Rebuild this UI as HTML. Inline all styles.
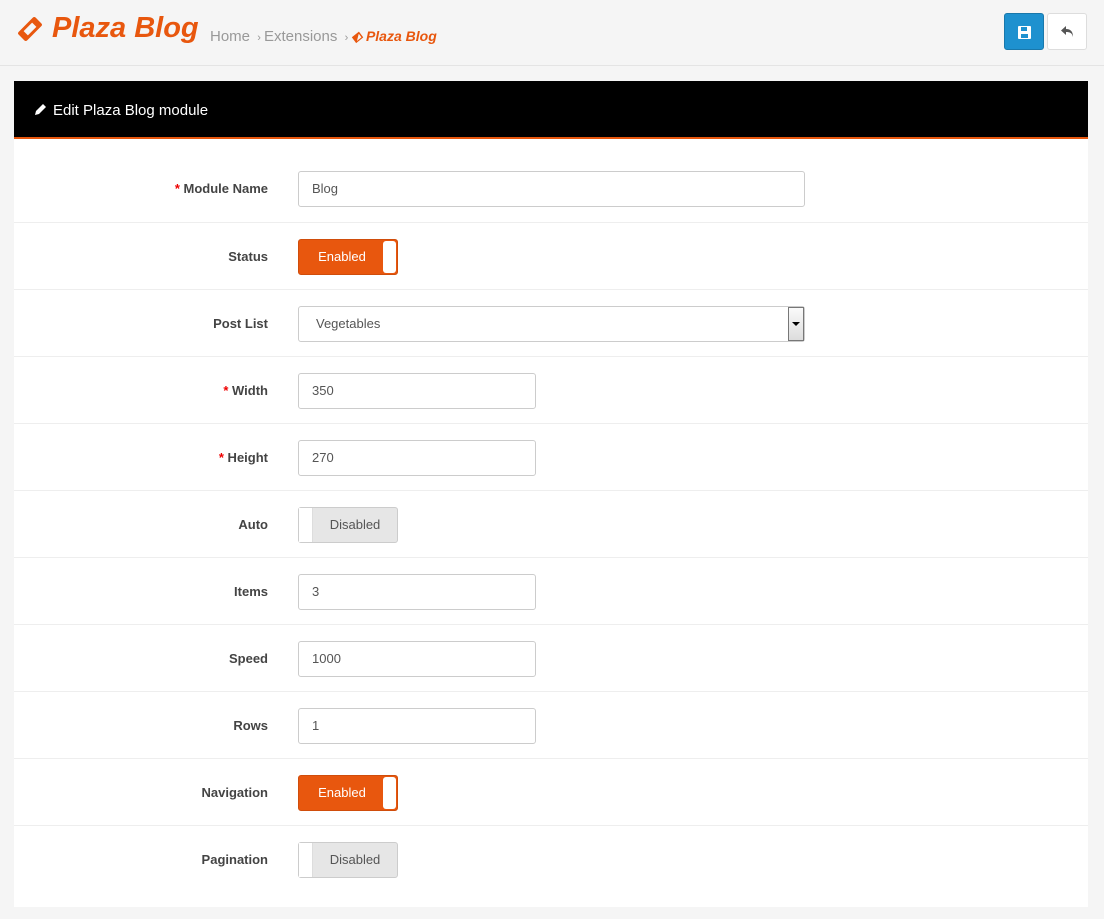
<!DOCTYPE html>
<html><head><meta charset="utf-8"><style>
*{box-sizing:border-box;margin:0;padding:0}
body{width:1104px;height:919px;background:#f5f5f5;font-family:"Liberation Sans",sans-serif;font-size:13px;color:#555;overflow:hidden;position:relative}
.hdr{height:66px;border-bottom:1px solid #e4e4e4;position:relative}
.title{position:absolute;left:14px;top:12px;font-size:29px;font-weight:bold;font-style:italic;color:#e8570e;display:flex;align-items:center}
.bc{position:absolute;left:210px;top:28px;font-size:15px;color:#999}
.bc span.c{color:#e8570e;font-weight:bold;font-style:italic;font-size:14px}
.btn{position:absolute;top:13px;width:40px;height:37px;border-radius:3px}
.panel{position:absolute;left:14px;top:81px;width:1074px;height:826px;background:#fff}
.ph{height:58px;background:#000;border-bottom:2px solid #e8570e;color:#fff;font-size:15px;padding:21px 0 0 20px}
.row{position:absolute;left:0;width:1074px;height:67px;border-top:1px solid #eee}
.lbl{position:absolute;right:820px;top:26px;font-weight:bold;font-size:13px;color:#444}
.lbl b{color:#e00}
.in{position:absolute;left:284px;top:16px;height:36px;border:1px solid #ccc;border-radius:3px;padding:9px 13px;font-size:13px;color:#555;background:#fff}
.tg{position:absolute;left:284px;top:16px;width:100px;height:36px;border-radius:3px}
.en{background:#e8570e;border:1px solid #d04d0b}
.en span{position:absolute;left:0;width:86px;text-align:center;top:9px;color:#fff}
.en i{position:absolute;right:1px;top:1px;width:13px;height:32px;background:#fff;border-radius:3px}
.di{background:#e6e6e6;border:1px solid #ccc}
.di i{position:absolute;left:0;top:0;width:14px;height:34px;background:#fff;border-right:1px solid #ddd}
.di span{position:absolute;left:14px;right:0;text-align:center;top:9px;color:#555}
</style></head><body>
<div class="hdr">
<div class="title"><svg width="32" height="32" viewBox="0 0 32 32"><g transform="rotate(-45 16 16)"><rect x="4" y="10" width="24" height="12" rx="2" fill="#e8570e"/><rect x="10" y="13" width="12" height="6" fill="#f5f5f5"/></g></svg><span style="margin-left:6px">Plaza Blog</span></div>
<div class="bc">Home <span style="font-size:11px">&nbsp;›&nbsp;</span>Extensions <span style="font-size:11px">&nbsp;›&nbsp;</span><span class="c">⬖ Plaza Blog</span></div>
<div class="btn" style="left:1004px;background:#1e91cf;border:1px solid #1978ab"><svg style="position:absolute;left:13px;top:12px" width="13" height="13" viewBox="0 0 13 13"><rect x="0" y="0" width="13" height="13" rx="1" fill="#fff"/><rect x="3" y="1" width="6" height="4" fill="#1e91cf"/><rect x="3" y="8" width="7" height="4" fill="#1e91cf"/></svg></div>
<div class="btn" style="left:1047px;background:#fff;border:1px solid #ddd"><svg style="position:absolute;left:12px;top:11px" width="15" height="14" viewBox="0 0 15 14"><path d="M6 1L1 5.5L6 10V7C10 7 12 8 13 12C13 7 11 4 6 4Z" fill="#555"/></svg></div>
</div>
<div class="panel">
<div class="ph"><svg width="13" height="13" viewBox="0 0 13 13" style="vertical-align:-1px;margin-right:6px"><path d="M1 12L2 8L9 1L12 4L5 11Z" fill="#fff"/></svg>Edit Plaza Blog module</div>
<div class="row" style="top:74px;border:none"><div class="lbl"><b>*</b> Module Name</div><div class="in" style="width:507px">Blog</div></div>
<div class="row" style="top:141px"><div class="lbl">Status</div><div class="tg en"><span>Enabled</span><i></i></div></div>
<div class="row" style="top:208px"><div class="lbl">Post List</div><div class="in" style="width:507px;padding-left:17px">Vegetables<div style="position:absolute;right:0;top:0;width:16px;height:34px;border:1px solid #777;background:linear-gradient(#fafafa,#ddd)"><div style="position:absolute;left:3px;top:14px;border:4px solid transparent;border-top:4px solid #000"></div></div></div></div>
<div class="row" style="top:275px"><div class="lbl"><b>*</b> Width</div><div class="in" style="width:238px">350</div></div>
<div class="row" style="top:342px"><div class="lbl"><b>*</b> Height</div><div class="in" style="width:238px">270</div></div>
<div class="row" style="top:409px"><div class="lbl">Auto</div><div class="tg di"><i></i><span>Disabled</span></div></div>
<div class="row" style="top:476px"><div class="lbl">Items</div><div class="in" style="width:238px">3</div></div>
<div class="row" style="top:543px"><div class="lbl">Speed</div><div class="in" style="width:238px">1000</div></div>
<div class="row" style="top:610px"><div class="lbl">Rows</div><div class="in" style="width:238px">1</div></div>
<div class="row" style="top:677px"><div class="lbl">Navigation</div><div class="tg en"><span>Enabled</span><i></i></div></div>
<div class="row" style="top:744px"><div class="lbl">Pagination</div><div class="tg di"><i></i><span>Disabled</span></div></div>
</div>
</body></html>
